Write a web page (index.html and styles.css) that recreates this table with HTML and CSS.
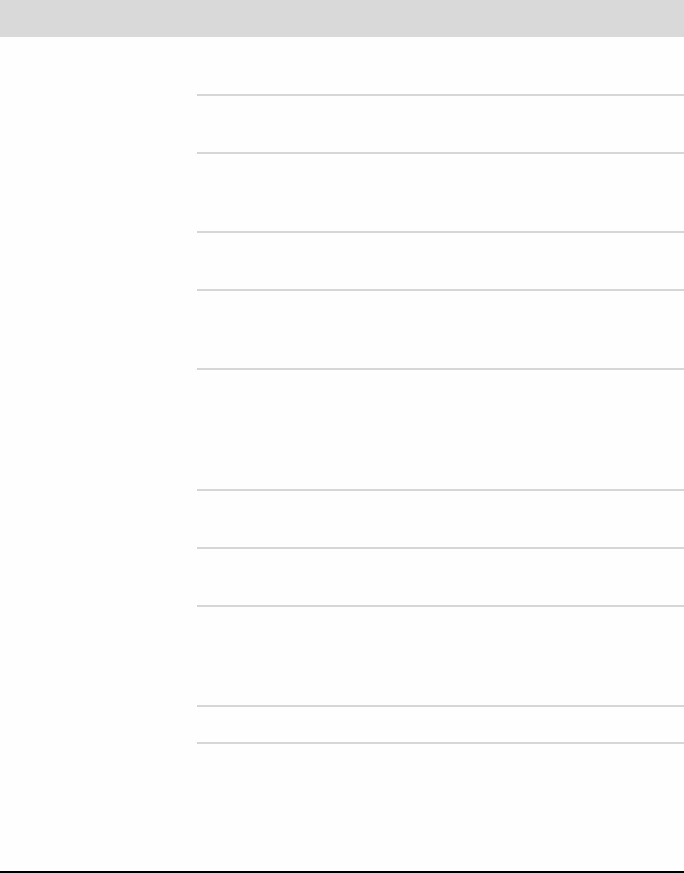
FILE: index.html
```html
<!DOCTYPE html>
<html lang="en">
<head>
<meta charset="utf-8">
<title>Page</title>
<link rel="stylesheet" href="styles.css">
</head>
<body>
<div class="page">
  <header class="topbar"></header>
  <main class="content">
    <div class="rows">
      <div class="row r58"></div>
      <div class="row r79"></div>
      <div class="row r58"></div>
      <div class="row r79"></div>
      <div class="row r121"></div>
      <div class="row r58"></div>
      <div class="row r58"></div>
      <div class="row r100"></div>
      <div class="row r37 last"></div>
    </div>
  </main>
  <footer class="footer"></footer>
</div>
</body>
</html>
```

FILE: styles.css
```css
html, body {
  margin: 0;
  padding: 0;
  background: #fefefe;
  font-family: "Liberation Sans", Arial, sans-serif;
}
.page {
  display: flex;
  flex-direction: column;
  height: 873px;
}
.topbar {
  height: 37px;
  background: #d9d9d9;
  flex: none;
}
.content {
  padding-left: 197px;
  padding-top: 57px;
}
.rows {
  display: flex;
  flex-direction: column;
}
.row {
  border-top: 2px solid #d6d6d6;
  box-sizing: border-box;
}
.row.last {
  border-bottom: 2px solid #d6d6d6;
}
.r58 { height: 58px; }
.r79 { height: 79px; }
.r121 { height: 121px; }
.r100 { height: 100px; }
.r37 { height: 39px; }
.footer {
  margin-top: auto;
  height: 2px;
  background: #000;
  flex: none;
}
```
